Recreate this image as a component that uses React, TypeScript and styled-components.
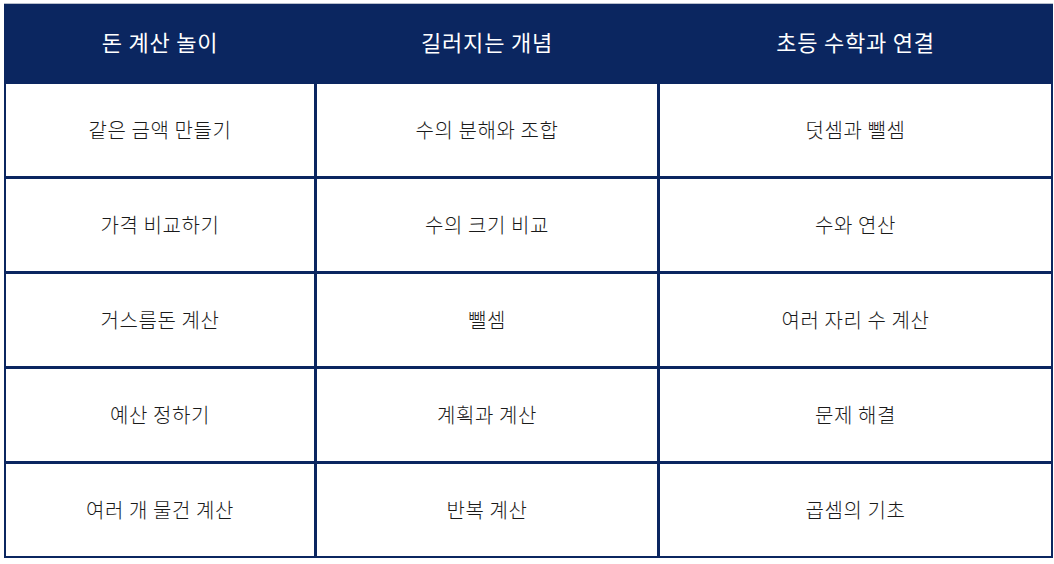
import React from "react";
import styled, { createGlobalStyle } from "styled-components";

const Global = createGlobalStyle`
  html, body { margin: 0; padding: 0; background: #ffffff; }
  body { font-family: "Noto Sans CJK KR", "Noto Sans", sans-serif; }
`;

const Page = styled.div`
  padding: 4px 0 0 4px;
`;

const Table = styled.div`
  width: 1049px;
  display: grid;
  grid-template-columns: 308px 340px 1fr;
  grid-template-rows: 77px repeat(5, 92px);
  gap: 3px;
  background: #0b2660;
  padding: 0 2px 2px 2px;
  box-sizing: border-box;
  box-shadow: 0 -1px 0 #b8bfcc;
`;

const HeadCell = styled.div`
  background: #0b2660;
  color: #ffffff;
  font-size: 22px;
  font-weight: 400;
  letter-spacing: 0.8px;
  display: flex;
  align-items: center;
  justify-content: center;
  padding-bottom: 3px;
`;

const Cell = styled.div`
  background: #ffffff;
  color: #1a1a1a;
  font-size: 20px;
  font-weight: 300;
  letter-spacing: 0.6px;
  display: flex;
  align-items: center;
  justify-content: center;
  padding-bottom: 2px;
`;

const headers = ["돈 계산 놀이", "길러지는 개념", "초등 수학과 연결"];
const rows = [
  ["같은 금액 만들기", "수의 분해와 조합", "덧셈과 뺄셈"],
  ["가격 비교하기", "수의 크기 비교", "수와 연산"],
  ["거스름돈 계산", "뺄셈", "여러 자리 수 계산"],
  ["예산 정하기", "계획과 계산", "문제 해결"],
  ["여러 개 물건 계산", "반복 계산", "곱셈의 기초"],
];

export default function App() {
  return (
    <>
      <Global />
      <Page>
        <Table>
          {headers.map((h) => (
            <HeadCell key={h}>{h}</HeadCell>
          ))}
          {rows.map((r, i) =>
            r.map((c, j) => <Cell key={`${i}-${j}`}>{c}</Cell>)
          )}
        </Table>
      </Page>
    </>
  );
}
